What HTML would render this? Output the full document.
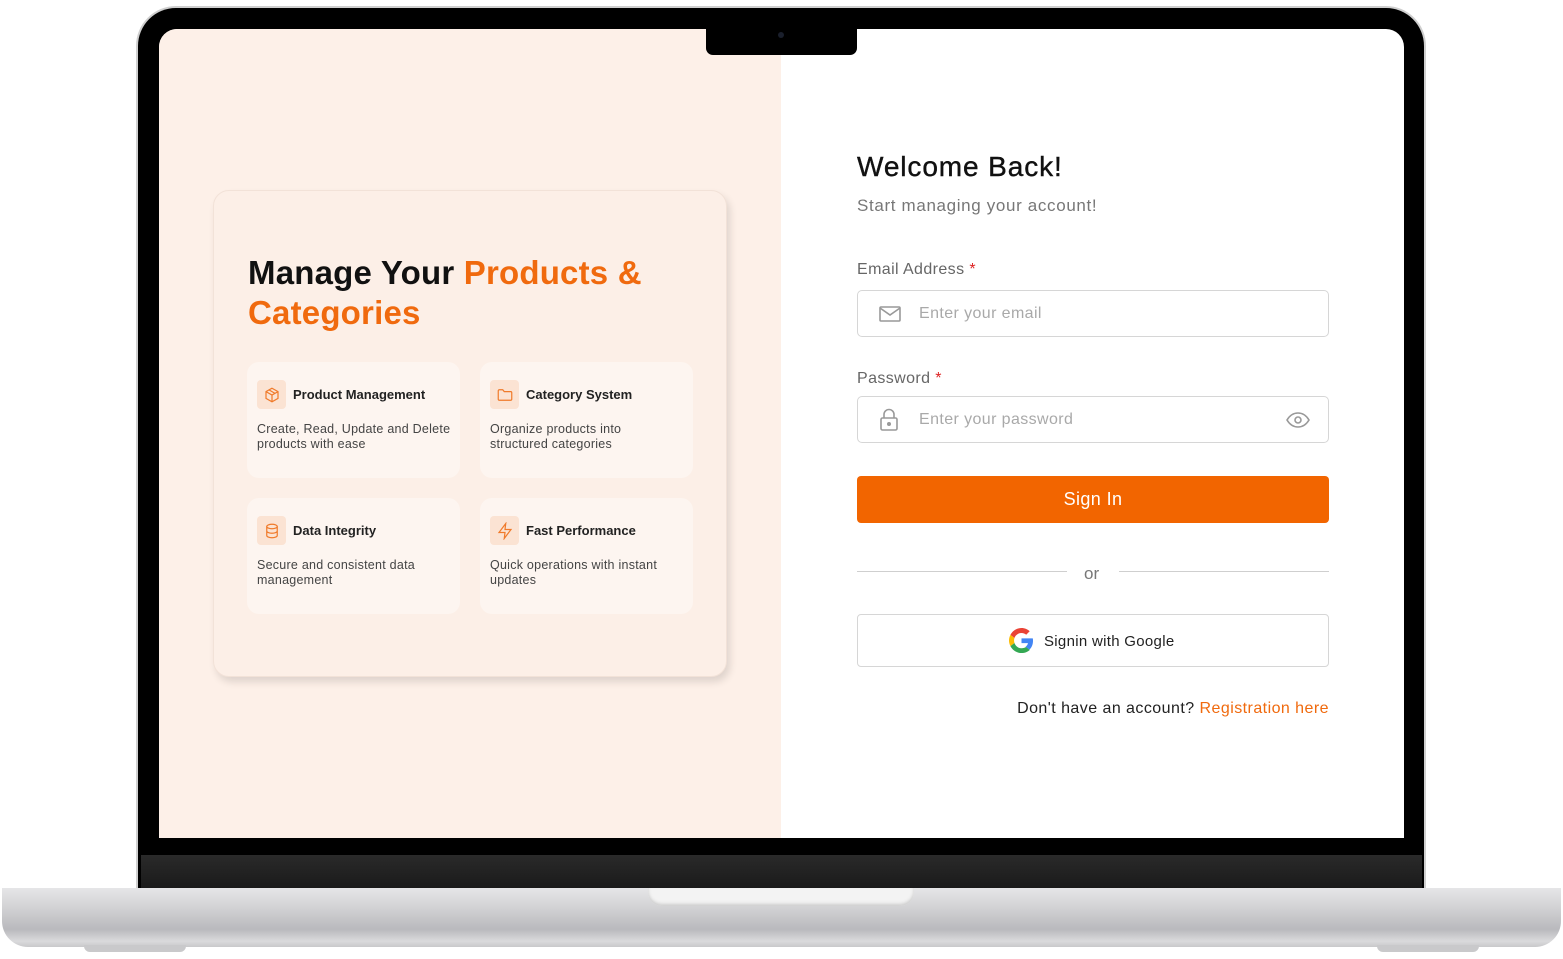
<!DOCTYPE html>
<html><head><style>
*{margin:0;padding:0;box-sizing:border-box}
body{width:1563px;height:959px;background:#fff;position:relative;overflow:hidden;font-family:"Liberation Sans",sans-serif}
.abs{position:absolute}
.lid{left:138px;top:8px;width:1286px;height:882px;background:#000;border-radius:38px 38px 0 0;box-shadow:0 0 0 2px #cfcfcf}
.chin{left:141px;top:855px;width:1281px;height:34px;background:linear-gradient(#2a2a2a,#1a1a1a)}
.screen{left:159px;top:29px;width:1245px;height:809px;background:#fff;border-radius:18px 18px 0 0;overflow:hidden}
.leftp{left:0;top:0;width:622px;height:809px;background:#fdf0e8}
.notch{left:706px;top:28px;width:151px;height:27px;background:#000;border-radius:0 0 7px 7px}
.base{left:2px;top:888px;width:1559px;height:59px;border-radius:0 0 26px 26px;background:linear-gradient(#e6e6e8 0%,#d4d4d6 30%,#b9b9bd 70%,#dadadc 90%,#c8c8ca 100%)}
.cut{left:648px;top:888px;width:266px;height:18px;background:#f3f3f3;border-radius:0 0 14px 14px;box-shadow:inset 0 -2px 3px #ccc}
.foot{top:945px;width:102px;height:7px;background:#c9c9cb;border-radius:0 0 6px 6px}
.card{left:213px;top:190px;width:514px;height:487px;background:#fcefe7;border-radius:16px;border:1px solid #f2e2d8;box-shadow:3px 5px 8px rgba(0,0,0,.12)}
h1{position:absolute;left:248px;top:253px;font-size:33px;line-height:40px;font-weight:bold;color:#111;letter-spacing:0.2px}
h1 span{color:#f06a0e}
.f{width:213px;height:116px;background:#fdf5f0;border-radius:12px}
.f .ic{position:absolute;left:10px;top:18px;width:29px;height:29px;background:#fbe3d3;border-radius:4px;display:flex;align-items:center;justify-content:center}
.f b{position:absolute;left:46px;top:25px;font-size:13px;color:#222;font-weight:600}
.f p{position:absolute;left:10px;top:60px;font-size:12.5px;line-height:15px;color:#444;letter-spacing:0.25px}
.lbl{font-size:16px;color:#666;letter-spacing:0.4px}
.lbl i{color:#d22;font-style:normal}
.inp{left:857px;width:472px;height:47px;border:1.5px solid #d6d6d6;border-radius:5px}
.inp span{position:absolute;left:61px;top:14px;font-size:16px;color:#a9a9a9;letter-spacing:0.4px}
</style></head><body>
<div class="abs lid"></div>
<div class="abs chin"></div>
<div class="abs screen">
 <div class="abs leftp"></div>
</div>
<div class="abs notch"><div class="abs" style="left:72px;top:4px;width:6px;height:6px;border-radius:50%;background:#1a1f2c"></div></div>
<div class="abs base"></div>
<div class="abs cut"></div>
<div class="abs foot" style="left:84px"></div>
<div class="abs foot" style="left:1377px"></div>

<div class="abs card"></div>
<h1>Manage Your <span>Products &amp;<br>Categories</span></h1>

<div class="abs f" style="left:247px;top:362px"><div class="ic"><svg width="18" height="18" viewBox="0 0 24 24" fill="none" stroke="#f07a2a" stroke-width="1.6"><path d="M12 3l8 4.5v9L12 21l-8-4.5v-9z M4 7.5l8 4.5 8-4.5 M12 12v9 M8 5.2l8 4.6"/></svg></div><b>Product Management</b><p>Create, Read, Update and Delete<br>products with ease</p></div>
<div class="abs f" style="left:480px;top:362px"><div class="ic"><svg width="18" height="18" viewBox="0 0 24 24" fill="none" stroke="#f07a2a" stroke-width="1.6"><path d="M3 6.5a1.5 1.5 0 011.5-1.5H9l2 2.5h8.5A1.5 1.5 0 0121 9v8.5a1.5 1.5 0 01-1.5 1.5h-15A1.5 1.5 0 013 17.5z"/></svg></div><b>Category System</b><p>Organize products into<br>structured categories</p></div>
<div class="abs f" style="left:247px;top:498px"><div class="ic"><svg width="18" height="18" viewBox="0 0 24 24" fill="none" stroke="#f07a2a" stroke-width="1.6"><ellipse cx="12" cy="6" rx="7" ry="3"/><path d="M5 6v12c0 1.7 3.1 3 7 3s7-1.3 7-3V6 M5 12c0 1.7 3.1 3 7 3s7-1.3 7-3"/></svg></div><b>Data Integrity</b><p>Secure and consistent data<br>management</p></div>
<div class="abs f" style="left:480px;top:498px"><div class="ic"><svg width="18" height="18" viewBox="0 0 24 24" fill="none" stroke="#f07a2a" stroke-width="1.6"><path d="M13 2L4 14h8l-1 8 9-12h-8z"/></svg></div><b>Fast Performance</b><p>Quick operations with instant<br>updates</p></div>

<div class="abs" style="left:857px;top:151px;font-size:28px;color:#111;font-weight:500;letter-spacing:0.9px;-webkit-text-stroke:0.4px #111">Welcome Back!</div>
<div class="abs" style="left:857px;top:196px;font-size:17px;color:#777;letter-spacing:0.65px">Start managing your account!</div>
<div class="abs lbl" style="left:857px;top:261px">Email Address <i>*</i></div>
<div class="abs inp" style="top:290px"><svg class="abs" style="left:21px;top:14px" width="22" height="18" viewBox="0 0 22 18" fill="none" stroke="#999" stroke-width="1.6"><rect x="1" y="2" width="20" height="14" rx="1"/><path d="M1 3l10 7 10-7"/></svg><span>Enter your email</span></div>
<div class="abs lbl" style="left:857px;top:370px">Password <i>*</i></div>
<div class="abs inp" style="top:396px"><svg class="abs" style="left:21px;top:11px" width="20" height="23" viewBox="0 0 20 23" fill="none" stroke="#999" stroke-width="1.6"><rect x="2" y="10" width="16" height="12" rx="1.5"/><path d="M5 10V6.5a5 5 0 0110 0V10"/><circle cx="10" cy="16" r="1.2" fill="#999"/></svg><span>Enter your password</span><svg class="abs" style="left:428px;top:15px" width="24" height="16" viewBox="0 0 24 16" fill="none" stroke="#999" stroke-width="1.6"><path d="M1 8c3-5 7-7 11-7s8 2 11 7c-3 5-7 7-11 7S4 13 1 8z"/><circle cx="12" cy="8" r="3"/></svg></div>
<div class="abs" style="left:857px;top:476px;width:472px;height:47px;background:#f26500;border-radius:4px;color:#fff;font-size:18px;text-align:center;line-height:47px;letter-spacing:0.4px">Sign In</div>
<div class="abs" style="left:857px;top:571px;width:210px;height:1px;background:#cfcfcf"></div>
<div class="abs" style="left:1119px;top:571px;width:210px;height:1px;background:#cfcfcf"></div>
<div class="abs" style="left:1084px;top:564px;font-size:17px;color:#777">or</div>
<div class="abs" style="left:857px;top:614px;width:472px;height:53px;border:1.5px solid #d6d6d6;border-radius:4px">
<svg class="abs" style="left:151px;top:13px" width="25" height="25" viewBox="0 0 48 48"><path fill="#EA4335" d="M24 9.5c3.5 0 6.6 1.2 9 3.5l6.7-6.7C35.6 2.4 30.2 0 24 0 14.6 0 6.6 5.4 2.7 13.3l7.8 6C12.4 13.7 17.7 9.5 24 9.5z"/><path fill="#4285F4" d="M46.1 24.5c0-1.6-.1-3.1-.4-4.5H24v9h12.4c-.5 2.9-2.2 5.3-4.6 7l7.3 5.7c4.3-4 7-9.9 7-17.2z"/><path fill="#FBBC05" d="M10.5 28.7c-.5-1.4-.8-3-.8-4.7s.3-3.2.8-4.7l-7.8-6C1 16.6 0 20.2 0 24s1 7.4 2.7 10.7l7.8-6z"/><path fill="#34A853" d="M24 48c6.5 0 11.9-2.1 15.9-5.8l-7.3-5.7c-2.2 1.5-5 2.3-8.6 2.3-6.3 0-11.6-4.2-13.5-9.9l-7.8 6C6.6 42.6 14.6 48 24 48z"/></svg>
<div class="abs" style="left:186px;top:18px;font-size:15px;color:#222;letter-spacing:0.3px">Signin with Google</div></div>
<div class="abs" style="right:234px;top:700px;font-size:16px;color:#222;letter-spacing:0.45px">Don't have an account? <span style="color:#f06a0e">Registration here</span></div>
</body></html>
